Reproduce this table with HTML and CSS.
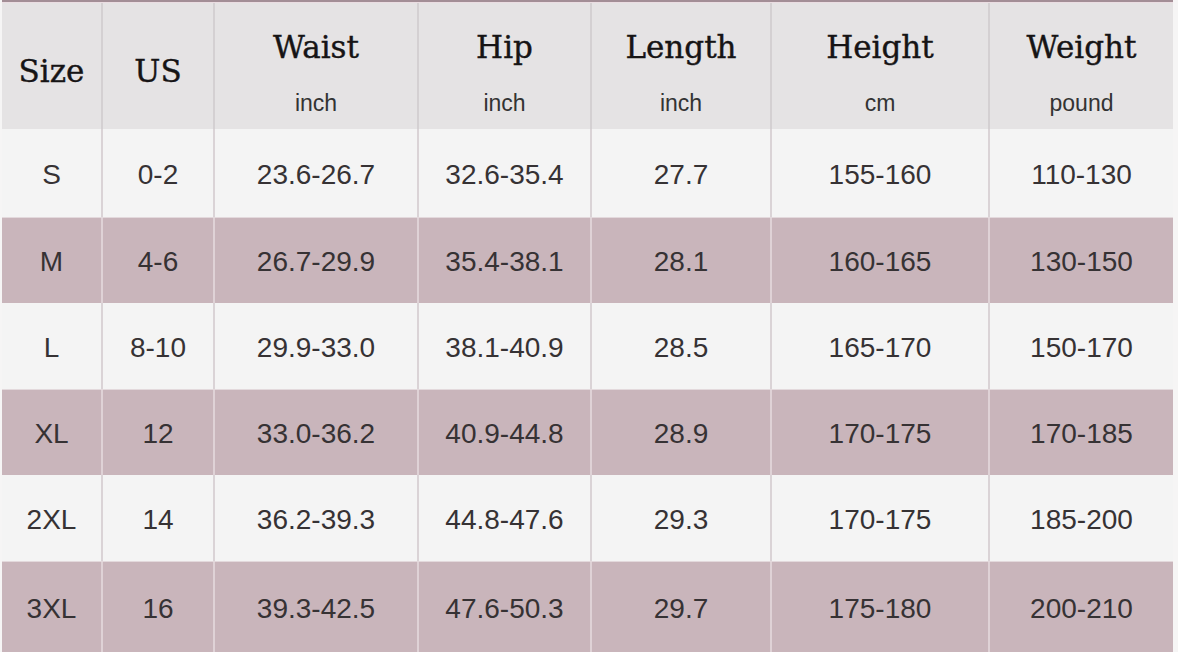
FILE: index.html
```html
<!DOCTYPE html>
<html>
<head>
<meta charset="utf-8">
<link rel="stylesheet" href="styles.css">
</head>
<body>
<div class="chart">
  <div class="row head">
    <div class="cell hc single"><span class="title">Size</span></div>
    <div class="cell hc single"><span class="title">US</span></div>
    <div class="cell hc"><span class="title">Waist</span><span class="unit">inch</span></div>
    <div class="cell hc"><span class="title">Hip</span><span class="unit">inch</span></div>
    <div class="cell hc"><span class="title">Length</span><span class="unit">inch</span></div>
    <div class="cell hc"><span class="title">Height</span><span class="unit">cm</span></div>
    <div class="cell hc"><span class="title">Weight</span><span class="unit">pound</span></div>
  </div>
  <div class="row light first">
    <div class="cell">S</div><div class="cell">0-2</div><div class="cell">23.6-26.7</div><div class="cell">32.6-35.4</div><div class="cell">27.7</div><div class="cell">155-160</div><div class="cell">110-130</div>
  </div>
  <div class="row pink">
    <div class="cell">M</div><div class="cell">4-6</div><div class="cell">26.7-29.9</div><div class="cell">35.4-38.1</div><div class="cell">28.1</div><div class="cell">160-165</div><div class="cell">130-150</div>
  </div>
  <div class="row light">
    <div class="cell">L</div><div class="cell">8-10</div><div class="cell">29.9-33.0</div><div class="cell">38.1-40.9</div><div class="cell">28.5</div><div class="cell">165-170</div><div class="cell">150-170</div>
  </div>
  <div class="row pink">
    <div class="cell">XL</div><div class="cell">12</div><div class="cell">33.0-36.2</div><div class="cell">40.9-44.8</div><div class="cell">28.9</div><div class="cell">170-175</div><div class="cell">170-185</div>
  </div>
  <div class="row light">
    <div class="cell">2XL</div><div class="cell">14</div><div class="cell">36.2-39.3</div><div class="cell">44.8-47.6</div><div class="cell">29.3</div><div class="cell">170-175</div><div class="cell">185-200</div>
  </div>
  <div class="row pink last">
    <div class="cell">3XL</div><div class="cell">16</div><div class="cell">39.3-42.5</div><div class="cell">47.6-50.3</div><div class="cell">29.7</div><div class="cell">175-180</div><div class="cell">200-210</div>
  </div>
</div>
</body>
</html>
```
FILE: styles.css
```css
html, body {
  margin: 0;
  padding: 0;
  background: #f6f5f5;
  overflow: hidden;
}
body {
  width: 1178px;
  height: 652px;
}
.chart {
  width: 1171px;
  margin-left: 2px;
  border-top: 2px solid #a38e96;
  display: flex;
  flex-direction: column;
  height: 650px;
}
.row {
  display: grid;
  grid-template-columns: 101px 112px 204px 173px 180px 218px 183px;
}
.cell {
  border-right: 2px solid #dad3d6;
  display: flex;
  align-items: center;
  justify-content: center;
  font-family: "Liberation Sans", Arial, sans-serif;
  font-size: 28px;
  color: #363234;
  padding-top: 3px;
  box-sizing: border-box;
}
.cell:last-child {
  border-right: none;
}
.head {
  height: 127px;
  background: #e5e3e4;
  border-top: 1px solid #ebdde2;
  box-sizing: border-box;
}
.head .cell {
  border-right-color: #d4d0d2;
}
.hc {
  flex-direction: column;
  justify-content: flex-start;
  padding-top: 28px;
}
.hc.single {
  padding-top: 52px;
}
.title {
  font-family: "DejaVu Serif", Georgia, serif;
  font-size: 31px;
  line-height: 32px;
  color: #161415;
  -webkit-text-stroke: 0.4px #161415;
  display: block;
}
.unit {
  font-family: "Liberation Sans", Arial, sans-serif;
  font-size: 23px;
  line-height: 22px;
  color: #333;
  display: block;
  margin-top: 29px;
}
.light {
  background: #f4f4f4;
  height: 86px;
}
.first {
  height: 88px;
}
.pink {
  background: #c9b5bb;
  height: 86px;
  border-top: 1px solid #e3d9dc;
  box-sizing: border-box;
}
.pink .cell {
  border-right-color: #dfd2d6;
}
.last {
  flex: 1;
  height: auto;
}
```
